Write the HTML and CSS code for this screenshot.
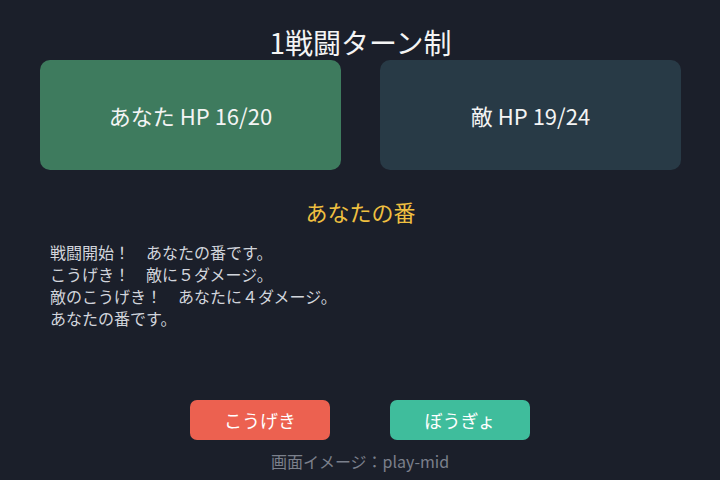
FILE: index.html
```html
<!DOCTYPE html>
<html lang="ja">
<head>
<meta charset="utf-8">
<title>1戦闘ターン制</title>
<link rel="stylesheet" href="styles.css">
</head>
<body>
<div class="screen">
  <h1 class="title">1戦闘ターン制</h1>
  <div class="cards">
    <div class="card card-player">あなた HP 16/20</div>
    <div class="card card-enemy">敵 HP 19/24</div>
  </div>
  <div class="turn">あなたの番</div>
  <div class="log">
    <div class="log-line">戦闘開始！　あなたの番です。</div>
    <div class="log-line">こうげき！　敵に５ダメージ。</div>
    <div class="log-line">敵のこうげき！　あなたに４ダメージ。</div>
    <div class="log-line">あなたの番です。</div>
  </div>
  <div class="actions">
    <button class="btn btn-attack">こうげき</button>
    <button class="btn btn-defend">ぼうぎょ</button>
  </div>
  <div class="caption">画面イメージ：play-mid</div>
</div>
</body>
</html>
```
FILE: styles.css
```css
html, body {
  margin: 0;
  padding: 0;
  background: #1b1f2a;
}
body {
  width: 720px;
  height: 480px;
  overflow: hidden;
  font-family: "Noto Sans CJK JP", "Noto Sans", sans-serif;
  color: #f2f2f2;
}
.screen {
  display: flex;
  flex-direction: column;
  padding: 24px 39px 0 40px;
}
.title {
  margin: 0;
  font-size: 28px;
  font-weight: 400;
  line-height: 36px;
  text-align: center;
  color: #f4f4f4;
}
.cards {
  display: flex;
  gap: 39px;
}
.card {
  flex: 1;
  height: 110px;
  border-radius: 10px;
  display: flex;
  align-items: center;
  justify-content: center;
  font-size: 22px;
  color: #f4f4f4;
}
.card-player {
  background: #3e7b5e;
}
.card-enemy {
  background: #283a46;
}
.turn {
  margin-top: 26px;
  font-size: 22px;
  line-height: 30px;
  text-align: center;
  color: #f0c040;
}
.log {
  margin-top: 15px;
  padding-left: 10px;
  font-size: 16px;
  line-height: 22px;
  color: #d2d5dc;
}
.actions {
  margin: 71px 1px 0 0;
  display: flex;
  justify-content: center;
  gap: 60px;
}
.btn {
  width: 140px;
  height: 40px;
  border: none;
  border-radius: 7px;
  font-family: inherit;
  font-size: 18px;
  color: #ffffff;
  padding: 0;
}
.btn-attack {
  background: #ec6150;
}
.btn-defend {
  background: #3fbd9c;
}
.caption {
  margin: 10px 1px 0 0;
  font-size: 16px;
  line-height: 22px;
  text-align: center;
  color: #7b808c;
}
```
